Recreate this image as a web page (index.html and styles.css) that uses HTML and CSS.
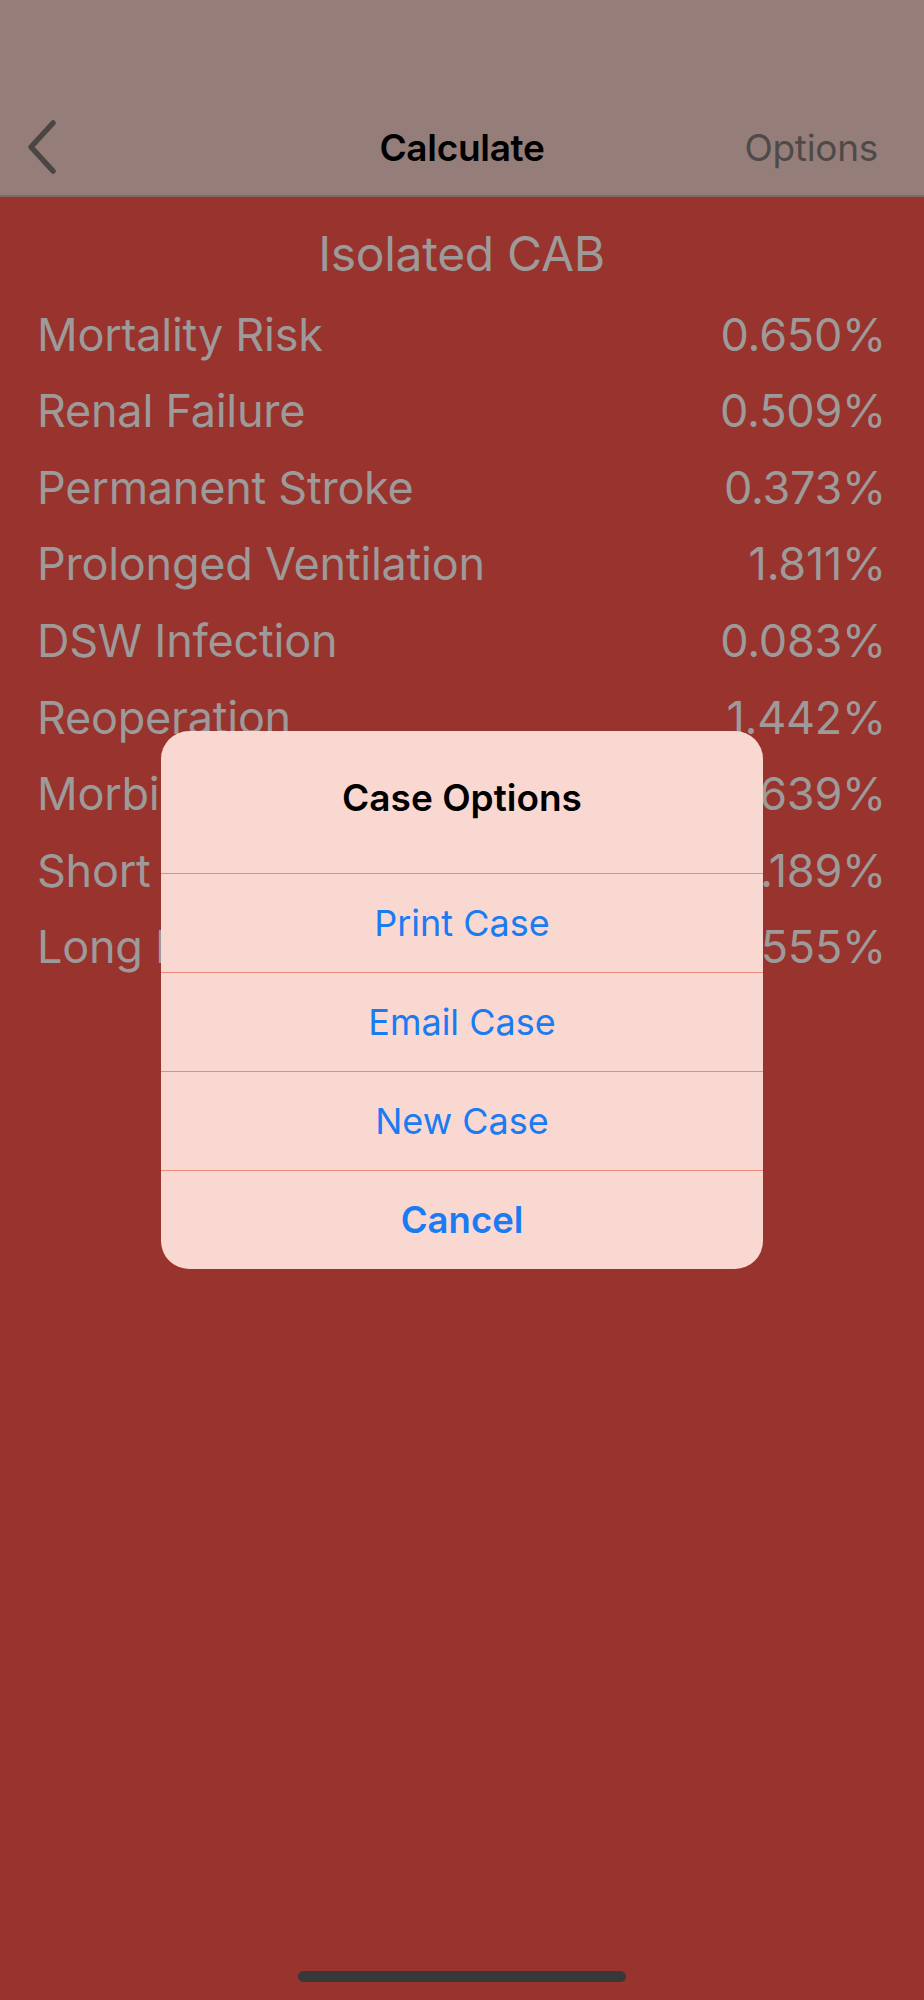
FILE: index.html
```html
<!DOCTYPE html>
<html>
<head>
<meta charset="utf-8">
<link rel="stylesheet" href="styles.css">
</head>
<body>
<div class="screen">
  <header class="navbar">
    <div class="nav-row">
      <div class="nav-back">
        <svg width="40" height="56" viewBox="0 0 40 56"><polyline points="26,4 4,28 26,52" fill="none" stroke="#4b4543" stroke-width="5.5" stroke-linecap="round" stroke-linejoin="round"/></svg>
      </div>
      <div class="nav-title">Calculate</div>
      <div class="nav-action">Options</div>
    </div>
  </header>
  <main class="content">
    <h1 class="case-title">Isolated CAB</h1>
    <div class="row"><span>Mortality Risk</span><span>0.650%</span></div>
    <div class="row"><span>Renal Failure</span><span>0.509%</span></div>
    <div class="row"><span>Permanent Stroke</span><span>0.373%</span></div>
    <div class="row"><span>Prolonged Ventilation</span><span>1.811%</span></div>
    <div class="row"><span>DSW Infection</span><span>0.083%</span></div>
    <div class="row"><span>Reoperation</span><span>1.442%</span></div>
    <div class="row"><span>Morbidity or Mortality</span><span>2.639%</span></div>
    <div class="row"><span>Short Length of Stay</span><span>1.189%</span></div>
    <div class="row"><span>Long Length of Stay</span><span>1.555%</span></div>
  </main>
  <div class="home-indicator"></div>

  <div class="alert">
    <div class="alert-title">Case Options</div>
    <div class="alert-btn">Print Case</div>
    <div class="alert-btn">Email Case</div>
    <div class="alert-btn">New Case</div>
    <div class="alert-btn cancel">Cancel</div>
  </div>
</div>
</body>
</html>
```
FILE: styles.css
```css
html, body {
  margin: 0;
  padding: 0;
  background: #99332e;
}
body {
  font-family: Inter, "Noto Sans", "Liberation Sans", sans-serif;
}
.screen {
  position: relative;
  width: 924px;
  min-height: 2000px;
  display: flex;
  flex-direction: column;
  background: #99332e;
}
.navbar {
  height: 195px;
  background: #957d79;
  border-bottom: 2px solid #7e6a67;
  display: flex;
  flex-direction: column;
  justify-content: flex-end;
}
.nav-row {
  height: 60px;
  margin-bottom: 18px;
  display: grid;
  grid-template-columns: 1fr auto 1fr;
  align-items: center;
}
.nav-back {
  padding-left: 27px;
  display: flex;
  align-items: center;
}
.nav-back svg { display: block; }
.nav-title {
  font-size: 37px;
  font-weight: 600;
  color: #000;
  letter-spacing: -0.3px;
}
.nav-action {
  justify-self: end;
  padding-right: 46px;
  font-size: 37px;
  color: #4f4a49;
  letter-spacing: -0.3px;
}
.content {
  padding: 25px 38px 0 37px;
  color: #9d9a99;
}
.case-title {
  margin: 0 0 10px;
  height: 64px;
  line-height: 64px;
  text-align: center;
  font-size: 48px;
  font-weight: 400;
  letter-spacing: -0.3px;
}
.row {
  height: 76.55px;
  display: flex;
  justify-content: space-between;
  align-items: center;
  font-size: 45px;
  letter-spacing: -0.25px;
}
.home-indicator {
  margin: auto auto 18px;
  width: 328px;
  height: 11px;
  border-radius: 6px;
  background: #383838;
}
.alert {
  position: absolute;
  left: 161px;
  top: 731px;
  width: 602px;
  background: #fad8d2;
  border-radius: 28px;
  overflow: hidden;
}
.alert-title {
  height: 143px;
  display: flex;
  align-items: center;
  justify-content: center;
  padding-bottom: 10px;
  box-sizing: border-box;
  font-size: 37px;
  font-weight: 600;
  color: #000;
  border-bottom: 1px solid #ec8a79;
}
.alert-btn {
  height: 98px;
  display: flex;
  align-items: center;
  justify-content: center;
  font-size: 36px;
  color: #1a7bf2;
  border-bottom: 1px solid #ec8a79;
}
.alert-btn.cancel {
  border-bottom: none;
  font-weight: 600;
  font-size: 36.5px;
  height: 98px;
}
```
